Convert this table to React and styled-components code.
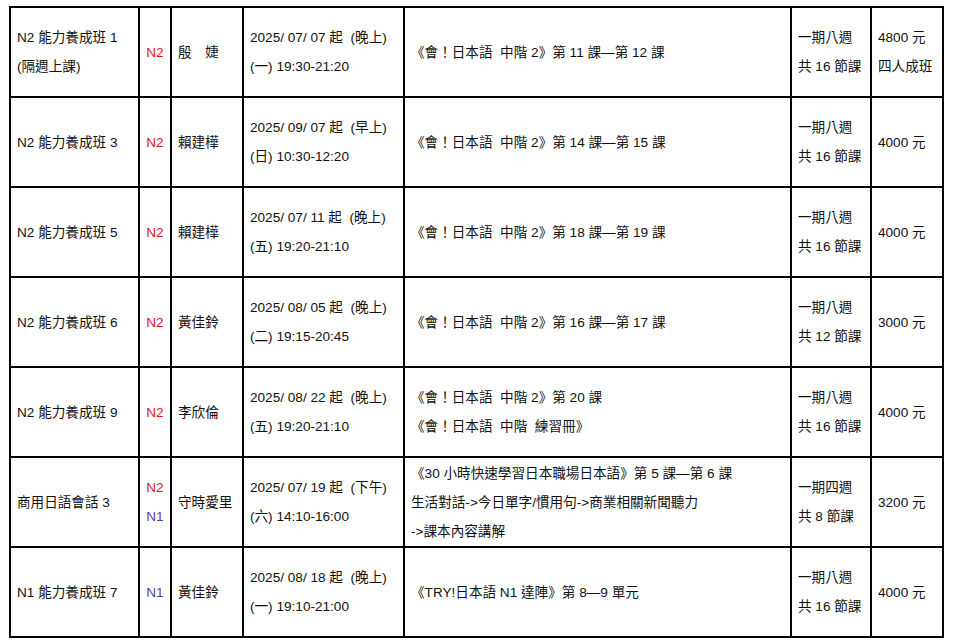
import React from 'react';
import styled, {createGlobalStyle} from 'styled-components';

const GlobalStyle = createGlobalStyle`
  html, body {
    margin: 0;
    padding: 0;
    background: #fff;
  }
  body {
    font-family: "Liberation Sans", "Noto Sans CJK TC", sans-serif;
    color: #111;
  }
`;

const Page = styled.div`
  padding: 6px 0 0 9px;
`;

const Table = styled.table`
  border-collapse: collapse;
  table-layout: fixed;
  width: 934px;
`;

const Col = styled.col`
  width: ${props => props.w}px;
`;

const Row = styled.tr`
  height: 90px;
`;

const Cell = styled.td`
  border: 2px solid #000;
  padding: 0 6px;
  vertical-align: middle;
  text-align: ${props => (props.center ? 'center' : 'left')};
  font-size: 13.6px;
  line-height: 29px;
  white-space: pre;
  overflow: hidden;
`;

const Line = styled.div`
  color: ${props => props.color || 'inherit'};
`;

const LEVEL_COLORS = {N2: '#e3161d', N1: '#5a3d9c'};
const COL_WIDTHS = [129, 32, 72, 161, 387, 80, 72];

const courses = [
    {
        name: ['N2 能力養成班 1', '(隔週上課)'], levels: ['N2'], teacher: '殷　婕',
        time: ['2025/ 07/ 07 起  (晚上)', '(一) 19:30-21:20'],
        book: ['《會！日本語  中階 2》第 11 課—第 12 課'],
        period: ['一期八週', '共 16 節課'], price: ['4800 元', '四人成班']
    },
    {
        name: ['N2 能力養成班 3'], levels: ['N2'], teacher: '賴建樺',
        time: ['2025/ 09/ 07 起  (早上)', '(日) 10:30-12:20'],
        book: ['《會！日本語  中階 2》第 14 課—第 15 課'],
        period: ['一期八週', '共 16 節課'], price: ['4000 元']
    },
    {
        name: ['N2 能力養成班 5'], levels: ['N2'], teacher: '賴建樺',
        time: ['2025/ 07/ 11 起  (晚上)', '(五) 19:20-21:10'],
        book: ['《會！日本語  中階 2》第 18 課—第 19 課'],
        period: ['一期八週', '共 16 節課'], price: ['4000 元']
    },
    {
        name: ['N2 能力養成班 6'], levels: ['N2'], teacher: '黃佳鈴',
        time: ['2025/ 08/ 05 起  (晚上)', '(二) 19:15-20:45'],
        book: ['《會！日本語  中階 2》第 16 課—第 17 課'],
        period: ['一期八週', '共 12 節課'], price: ['3000 元']
    },
    {
        name: ['N2 能力養成班 9'], levels: ['N2'], teacher: '李欣倫',
        time: ['2025/ 08/ 22 起  (晚上)', '(五) 19:20-21:10'],
        book: ['《會！日本語  中階 2》第 20 課', '《會！日本語  中階  練習冊》'],
        period: ['一期八週', '共 16 節課'], price: ['4000 元']
    },
    {
        name: ['商用日語會話 3'], levels: ['N2', 'N1'], teacher: '守時愛里',
        time: ['2025/ 07/ 19 起  (下午)', '(六) 14:10-16:00'],
        book: ['《30 小時快速學習日本職場日本語》第 5 課—第 6 課', '生活對話->今日單字/慣用句->商業相關新聞聽力', '->課本內容講解'],
        period: ['一期四週', '共 8 節課'], price: ['3200 元']
    },
    {
        name: ['N1 能力養成班 7'], levels: ['N1'], teacher: '黃佳鈴',
        time: ['2025/ 08/ 18 起  (晚上)', '(一) 19:10-21:00'],
        book: ['《TRY!日本語 N1 達陣》第 8—9 單元'],
        period: ['一期八週', '共 16 節課'], price: ['4000 元']
    }
];

const Lines = ({items}) => items.map((text, i) => <Line key={i}>{text}</Line>);

export default function App() {
    return (
        <Page>
            <GlobalStyle/>
            <Table>
                <colgroup>
                    {COL_WIDTHS.map((w, i) => <Col key={i} w={w}/>)}
                </colgroup>
                <tbody>
                {courses.map((c, index) => (
                    <Row key={index}>
                        <Cell><Lines items={c.name}/></Cell>
                        <Cell center>
                            {c.levels.map(level => (
                                <Line key={level} color={LEVEL_COLORS[level]}>{level}</Line>
                            ))}
                        </Cell>
                        <Cell>{c.teacher}</Cell>
                        <Cell><Lines items={c.time}/></Cell>
                        <Cell><Lines items={c.book}/></Cell>
                        <Cell><Lines items={c.period}/></Cell>
                        <Cell><Lines items={c.price}/></Cell>
                    </Row>
                ))}
                </tbody>
            </Table>
        </Page>
    );
}
